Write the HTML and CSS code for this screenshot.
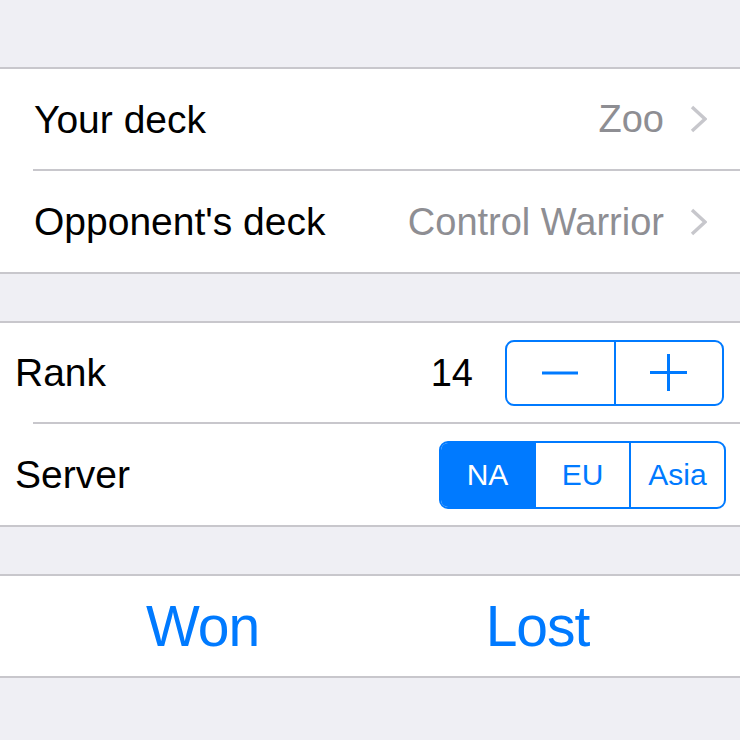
FILE: index.html
```html
<!DOCTYPE html>
<html lang="en">
<head>
<meta charset="utf-8">
<title>Game result</title>
<link rel="stylesheet" href="styles.css">
</head>
<body>
<div class="screen">
  <div class="gap gap-top"></div>

  <section class="group">
    <div class="cell cell-nav">
      <span class="label">Your deck</span>
      <span class="detail">Zoo</span>
      <svg class="chev" width="17" height="28" viewBox="0 0 17 28" aria-hidden="true"><polyline points="2,2 15,14 2,26" /></svg>
    </div>
    <div class="sep"></div>
    <div class="cell cell-nav cell-tall">
      <span class="label">Opponent's deck</span>
      <span class="detail">Control Warrior</span>
      <svg class="chev" width="17" height="28" viewBox="0 0 17 28" aria-hidden="true"><polyline points="2,2 15,14 2,26" /></svg>
    </div>
  </section>

  <div class="gap"></div>

  <section class="group">
    <div class="cell cell-ctrl cell-short">
      <span class="label">Rank</span>
      <span class="value">14</span>
      <div class="stepper">
        <button class="step" aria-label="Decrease">
          <svg width="36" height="36" viewBox="0 0 36 36"><line x1="0" y1="18" x2="36" y2="18" /></svg>
        </button>
        <button class="step step-right" aria-label="Increase">
          <svg width="37" height="37" viewBox="0 0 37 37"><line x1="0" y1="18.5" x2="37" y2="18.5" /><line x1="18.5" y1="0" x2="18.5" y2="37" /></svg>
        </button>
      </div>
    </div>
    <div class="sep"></div>
    <div class="cell cell-ctrl cell-tall">
      <span class="label">Server</span>
      <div class="segmented">
        <span class="seg seg-on">NA</span>
        <span class="seg">EU</span>
        <span class="seg">Asia</span>
      </div>
    </div>
  </section>

  <div class="gap"></div>

  <section class="group">
    <div class="cell cell-actions">
      <button class="action">Won</button>
      <button class="action">Lost</button>
    </div>
  </section>
</div>
</body>
</html>
```

FILE: styles.css
```css
* {
  box-sizing: border-box;
}

html, body {
  margin: 0;
  padding: 0;
}

body {
  background: #efeff4;
  font-family: "Liberation Sans", Arial, sans-serif;
  color: #000;
}

.screen {
  width: 740px;
  height: 740px;
  overflow: hidden;
  display: flex;
  flex-direction: column;
}

.gap {
  height: 47px;
  flex: none;
}

.gap-top {
  height: 67px;
}

.group {
  background: #fff;
  border-top: 2px solid #c8c7cc;
  border-bottom: 2px solid #c8c7cc;
  flex: none;
}

.sep {
  height: 2px;
  margin-left: 33px;
  background: #c8c7cc;
}

.cell {
  height: 100px;
  display: flex;
  align-items: center;
}

.cell-tall {
  height: 101px;
}

.cell-short {
  height: 99px;
}

.label,
.detail,
.value {
  font-size: 38px;
  line-height: 1;
  white-space: nowrap;
}

.label {
  font-size: 39px;
}

.cell-nav {
  padding: 0 33px 0 34px;
}

.detail {
  margin-left: auto;
  color: #8e8e93;
}

.chev {
  flex: none;
  margin-left: 26px;
  fill: none;
  stroke: #c7c7cc;
  stroke-width: 3.4;
}

.cell-ctrl {
  padding: 0 14px 0 15px;
}

.value {
  margin-left: auto;
  margin-right: 32px;
}

.stepper {
  display: flex;
  width: 219px;
  height: 66px;
  border: 2px solid #007aff;
  border-radius: 9px;
  margin-right: 2px;
}

.step {
  flex: 1;
  display: flex;
  align-items: center;
  justify-content: center;
  background: none;
  border: 0;
  padding: 0;
  margin: 0;
}

.step-right {
  border-left: 2px solid #007aff;
}

.step svg {
  stroke: #007aff;
  stroke-width: 3;
}

.segmented {
  margin-left: auto;
  display: flex;
  width: 287px;
  height: 68px;
  border: 2px solid #007aff;
  border-radius: 9px;
  overflow: hidden;
}

.seg {
  flex: 1;
  display: flex;
  align-items: center;
  justify-content: center;
  font-size: 30px;
  line-height: 1;
  color: #007aff;
}

.seg + .seg {
  border-left: 2px solid #007aff;
}

.seg-on {
  background: #007aff;
  color: #fff;
}

.cell-actions {
  padding: 0 35px;
}

.action {
  flex: 1;
  background: none;
  border: 0;
  padding: 0;
  margin: 0;
  font-family: "Liberation Sans", Arial, sans-serif;
  font-size: 57px;
  line-height: 1;
  letter-spacing: -1px;
  color: #007aff;
  text-align: center;
}
```
